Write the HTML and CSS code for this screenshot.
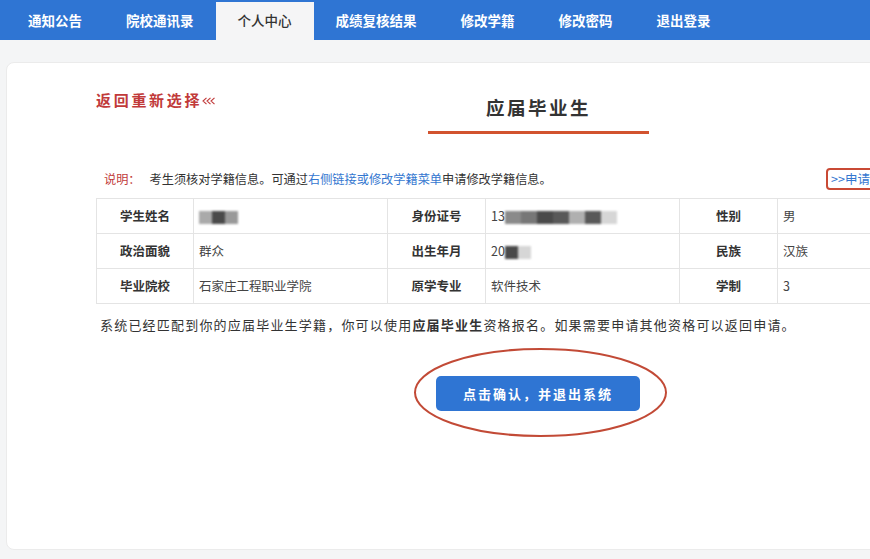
FILE: index.html
```html
<!DOCTYPE html>
<html lang="zh-CN">
<head>
<meta charset="utf-8">
<title>个人中心</title>
<link rel="stylesheet" href="styles.css">
</head>
<body>
<nav class="topnav">
  <a class="tab">通知公告</a>
  <a class="tab">院校通讯录</a>
  <a class="tab active">个人中心</a>
  <a class="tab">成绩复核结果</a>
  <a class="tab">修改学籍</a>
  <a class="tab">修改密码</a>
  <a class="tab">退出登录</a>
</nav>
<main class="page">
  <section class="card">
    <div class="header">
      <a class="back">返回重新选择<svg class="chev" width="14" height="8" viewBox="0 0 14 8" aria-hidden="true"><path d="M4.5 0.8 L1 4 L4.5 7.2 M8.5 0.8 L5 4 L8.5 7.2 M12.5 0.8 L9 4 L12.5 7.2" fill="none" stroke="#c13a3a" stroke-width="1.1"/></svg></a>
      <h1 class="title">应届毕业生</h1>
    </div>
    <div class="note-row">
      <p class="note"><span class="note-label">说明：</span>考生须核对学籍信息。可通过<span class="link">右侧链接或修改学籍菜单</span>申请修改学籍信息。</p>
      <a class="apply">&gt;&gt;申请修改学籍</a>
    </div>
    <table class="info">
      <colgroup>
        <col class="c-label"><col class="c-value"><col class="c-label2"><col class="c-value"><col class="c-label2"><col class="c-value">
      </colgroup>
      <tr>
        <th>学生姓名</th>
        <td><span class="blur"><i class="b1"></i><i class="b2"></i><i class="b3"></i></span></td>
        <th>身份证号</th>
        <td>13<span class="blur long"><i class="b4"></i><i class="b5"></i><i class="b2"></i><i class="b6"></i><i class="b7"></i><i class="b6"></i><i class="b8"></i></span></td>
        <th>性别</th>
        <td>男</td>
      </tr>
      <tr>
        <th>政治面貌</th>
        <td>群众</td>
        <th>出生年月</th>
        <td>20<span class="blur"><i class="b2"></i><i class="b8"></i></span></td>
        <th>民族</th>
        <td>汉族</td>
      </tr>
      <tr>
        <th>毕业院校</th>
        <td>石家庄工程职业学院</td>
        <th>原学专业</th>
        <td>软件技术</td>
        <th>学制</th>
        <td>3</td>
      </tr>
    </table>
    <p class="summary">系统已经匹配到你的应届毕业生学籍，你可以使用<b>应届毕业生</b>资格报名。如果需要申请其他资格可以返回申请。</p>
    <div class="confirm-wrap">
      <button class="confirm">点击确认，并退出系统</button>
      <svg class="ring" width="255" height="91" viewBox="0 0 255 91" aria-hidden="true">
        <ellipse cx="127.5" cy="45.5" rx="125.5" ry="43.5" fill="none" stroke="#c24a36" stroke-width="2"/>
      </svg>
    </div>
  </section>
</main>
</body>
</html>
```
FILE: styles.css
```css
html, body {
  margin: 0;
  padding: 0;
  overflow: hidden;
  background: #f4f5f6;
  font-family: "Noto Sans CJK SC", "Noto Sans", sans-serif;
  color: #333;
}

.topnav {
  display: flex;
  align-items: flex-end;
  height: 40px;
  background: #2f75d3;
  padding-left: 6px;
}

.tab {
  display: flex;
  align-items: center;
  height: 40px;
  padding: 0 22px;
  font-size: 13.5px;
  font-weight: 700;
  color: #fff;
  white-space: nowrap;
  box-sizing: border-box;
}

.tab.active {
  height: 38px;
  background: #f5f5f6;
  color: #333;
  font-weight: 500;
  padding-bottom: 2px;
}

.page {
  padding: 22px 0 0 6px;
}

.card {
  width: 1000px;
  height: 488px;
  box-sizing: border-box;
  background: #fff;
  border: 1px solid #ebebeb;
  border-radius: 8px;
  padding: 27px 0 0 89px;
}

.header {
  display: flex;
  align-items: flex-start;
}

.back {
  display: flex;
  align-items: center;
  width: 332px;
  height: 20px;
  font-size: 15px;
  line-height: 20px;
  font-weight: 700;
  letter-spacing: 2.7px;
  color: #c13a3a;
  white-space: nowrap;
}

.chev {
  margin-left: 0;
  margin-top: 2px;
}

.title {
  width: 221px;
  margin: 4px 0 0;
  padding-bottom: 11px;
  border-bottom: 3px solid #d2532f;
  text-align: center;
  font-size: 18.5px;
  line-height: 26px;
  font-weight: 700;
  letter-spacing: 2.5px;
  color: #333;
}

.note-row {
  display: grid;
  grid-template-columns: 730px auto;
  align-items: center;
  margin-top: 34px;
  height: 22px;
}

.note {
  margin: 0;
  padding-left: 8px;
  font-size: 12.2px;
  line-height: 22px;
  color: #333;
  white-space: nowrap;
}

.note-label {
  color: #c13a3a;
  margin-right: 9px;
}

.link {
  color: #3477d0;
}

.apply {
  justify-self: start;
  height: 22px;
  box-sizing: border-box;
  border: 2px solid #c94a35;
  border-radius: 4px;
  padding: 0 3px;
  font-size: 12.5px;
  line-height: 18px;
  color: #3477d0;
  white-space: nowrap;
}

.info {
  margin-top: 8px;
  border-collapse: collapse;
  table-layout: fixed;
  width: 875px;
}

.c-label { width: 97px; }
.c-label2 { width: 98px; }
.c-value { width: 194px; }

.info th,
.info td {
  height: 35px;
  box-sizing: border-box;
  border: 1px solid #e4e4e4;
  font-size: 12.5px;
  line-height: 18px;
  padding: 0 5px;
  white-space: nowrap;
}

.info th {
  font-weight: 700;
  text-align: center;
  color: #333;
}

.info td {
  text-align: left;
  color: #444;
}

.blur {
  display: inline-flex;
  vertical-align: middle;
  height: 13px;
  filter: blur(0.8px);
}

.blur i {
  display: block;
  width: 13px;
  height: 13px;
}

.blur.long i { width: 16px; }

.b1 { background: #aaa; }
.b2 { background: #4a4a4a; }
.b3 { background: #999; }
.b4 { background: #8a8a8a; }
.b5 { background: #777; }
.b6 { background: #595959; }
.b7 { background: #b0b0b0; }
.b8 { background: #d6d6d6; }

.summary {
  margin: 11px 0 0;
  padding-left: 4px;
  font-size: 13px;
  line-height: 20px;
  letter-spacing: 1.2px;
  color: #333;
  white-space: nowrap;
}

.summary b {
  font-weight: 700;
}

.confirm-wrap {
  position: relative;
  width: 204px;
  margin: 41px 0 0 340px;
}

.confirm {
  display: block;
  width: 204px;
  height: 35px;
  border: none;
  border-radius: 5px;
  background: #2f75d3;
  color: #fff;
  font-family: "Noto Sans CJK SC", "Noto Sans", sans-serif;
  font-size: 13px;
  font-weight: 700;
  letter-spacing: 2px;
  padding: 0;
}

.ring {
  position: absolute;
  left: -23px;
  top: -29px;
  pointer-events: none;
}
```
